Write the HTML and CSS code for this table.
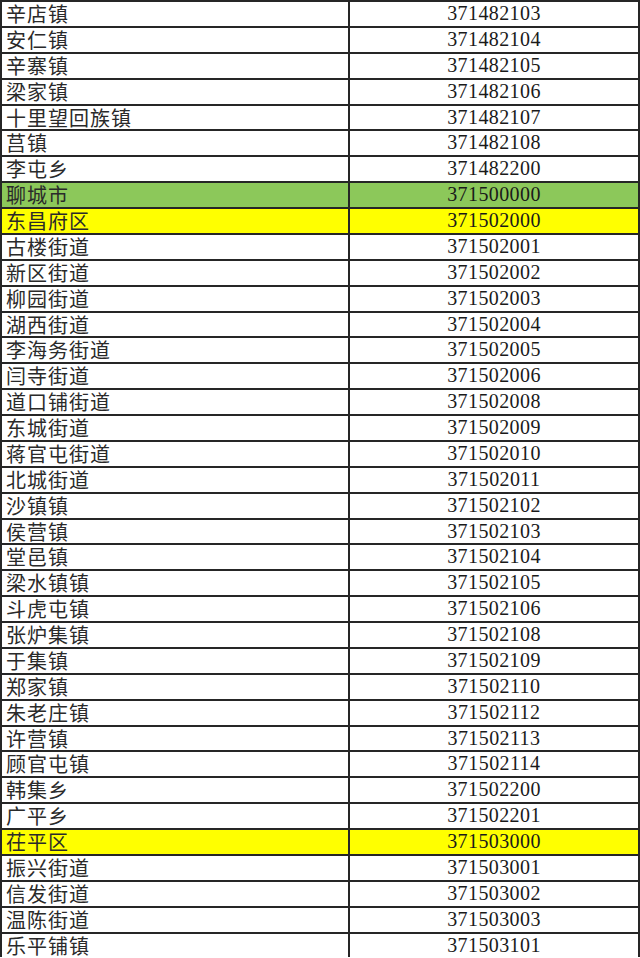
FILE: index.html
```html
<!DOCTYPE html>
<html lang="zh">
<head>
<meta charset="utf-8">
<title>行政区划代码</title>
<link rel="stylesheet" href="styles.css">
</head>
<body>
<div class="sheet">
<div class="row"><div class="name">辛店镇</div><div class="code">371482103</div></div>
<div class="row"><div class="name">安仁镇</div><div class="code">371482104</div></div>
<div class="row"><div class="name">辛寨镇</div><div class="code">371482105</div></div>
<div class="row"><div class="name">梁家镇</div><div class="code">371482106</div></div>
<div class="row"><div class="name">十里望回族镇</div><div class="code">371482107</div></div>
<div class="row"><div class="name">莒镇</div><div class="code">371482108</div></div>
<div class="row"><div class="name">李屯乡</div><div class="code">371482200</div></div>
<div class="row city"><div class="name">聊城市</div><div class="code">371500000</div></div>
<div class="row district"><div class="name">东昌府区</div><div class="code">371502000</div></div>
<div class="row"><div class="name">古楼街道</div><div class="code">371502001</div></div>
<div class="row"><div class="name">新区街道</div><div class="code">371502002</div></div>
<div class="row"><div class="name">柳园街道</div><div class="code">371502003</div></div>
<div class="row"><div class="name">湖西街道</div><div class="code">371502004</div></div>
<div class="row"><div class="name">李海务街道</div><div class="code">371502005</div></div>
<div class="row"><div class="name">闫寺街道</div><div class="code">371502006</div></div>
<div class="row"><div class="name">道口铺街道</div><div class="code">371502008</div></div>
<div class="row"><div class="name">东城街道</div><div class="code">371502009</div></div>
<div class="row"><div class="name">蒋官屯街道</div><div class="code">371502010</div></div>
<div class="row"><div class="name">北城街道</div><div class="code">371502011</div></div>
<div class="row"><div class="name">沙镇镇</div><div class="code">371502102</div></div>
<div class="row"><div class="name">侯营镇</div><div class="code">371502103</div></div>
<div class="row"><div class="name">堂邑镇</div><div class="code">371502104</div></div>
<div class="row"><div class="name">梁水镇镇</div><div class="code">371502105</div></div>
<div class="row"><div class="name">斗虎屯镇</div><div class="code">371502106</div></div>
<div class="row"><div class="name">张炉集镇</div><div class="code">371502108</div></div>
<div class="row"><div class="name">于集镇</div><div class="code">371502109</div></div>
<div class="row"><div class="name">郑家镇</div><div class="code">371502110</div></div>
<div class="row"><div class="name">朱老庄镇</div><div class="code">371502112</div></div>
<div class="row"><div class="name">许营镇</div><div class="code">371502113</div></div>
<div class="row"><div class="name">顾官屯镇</div><div class="code">371502114</div></div>
<div class="row"><div class="name">韩集乡</div><div class="code">371502200</div></div>
<div class="row"><div class="name">广平乡</div><div class="code">371502201</div></div>
<div class="row district"><div class="name">茌平区</div><div class="code">371503000</div></div>
<div class="row"><div class="name">振兴街道</div><div class="code">371503001</div></div>
<div class="row"><div class="name">信发街道</div><div class="code">371503002</div></div>
<div class="row"><div class="name">温陈街道</div><div class="code">371503003</div></div>
<div class="row"><div class="name">乐平铺镇</div><div class="code">371503101</div></div>
</div>
</body>
</html>
```
FILE: styles.css
```css
html, body {
  margin: 0;
  padding: 0;
  background: #ffffff;
}

.sheet {
  width: 640px;
  box-sizing: border-box;
  border-left: 2px solid #262626;
  border-right: 2px solid #262626;
}

.row {
  display: grid;
  grid-template-columns: 348px 1fr;
  height: 25.89px;
  box-sizing: border-box;
  border-top: 2px solid #262626;
}

.name {
  border-right: 2px solid #262626;
  padding-left: 4px;
  font-family: "Noto Sans CJK SC", "Noto Sans", sans-serif;
  font-size: 20px;
  letter-spacing: 1px;
  line-height: 23px;
  color: #2a2a2a;
  white-space: nowrap;
}

.code {
  text-align: center;
  font-family: "Liberation Serif", "Times New Roman", serif;
  font-size: 20px;
  letter-spacing: 0.4px;
  line-height: 23px;
  color: #1a1a1a;
}

.city {
  background: #8cc85a;
}

.district {
  background: #ffff00;
}
```
